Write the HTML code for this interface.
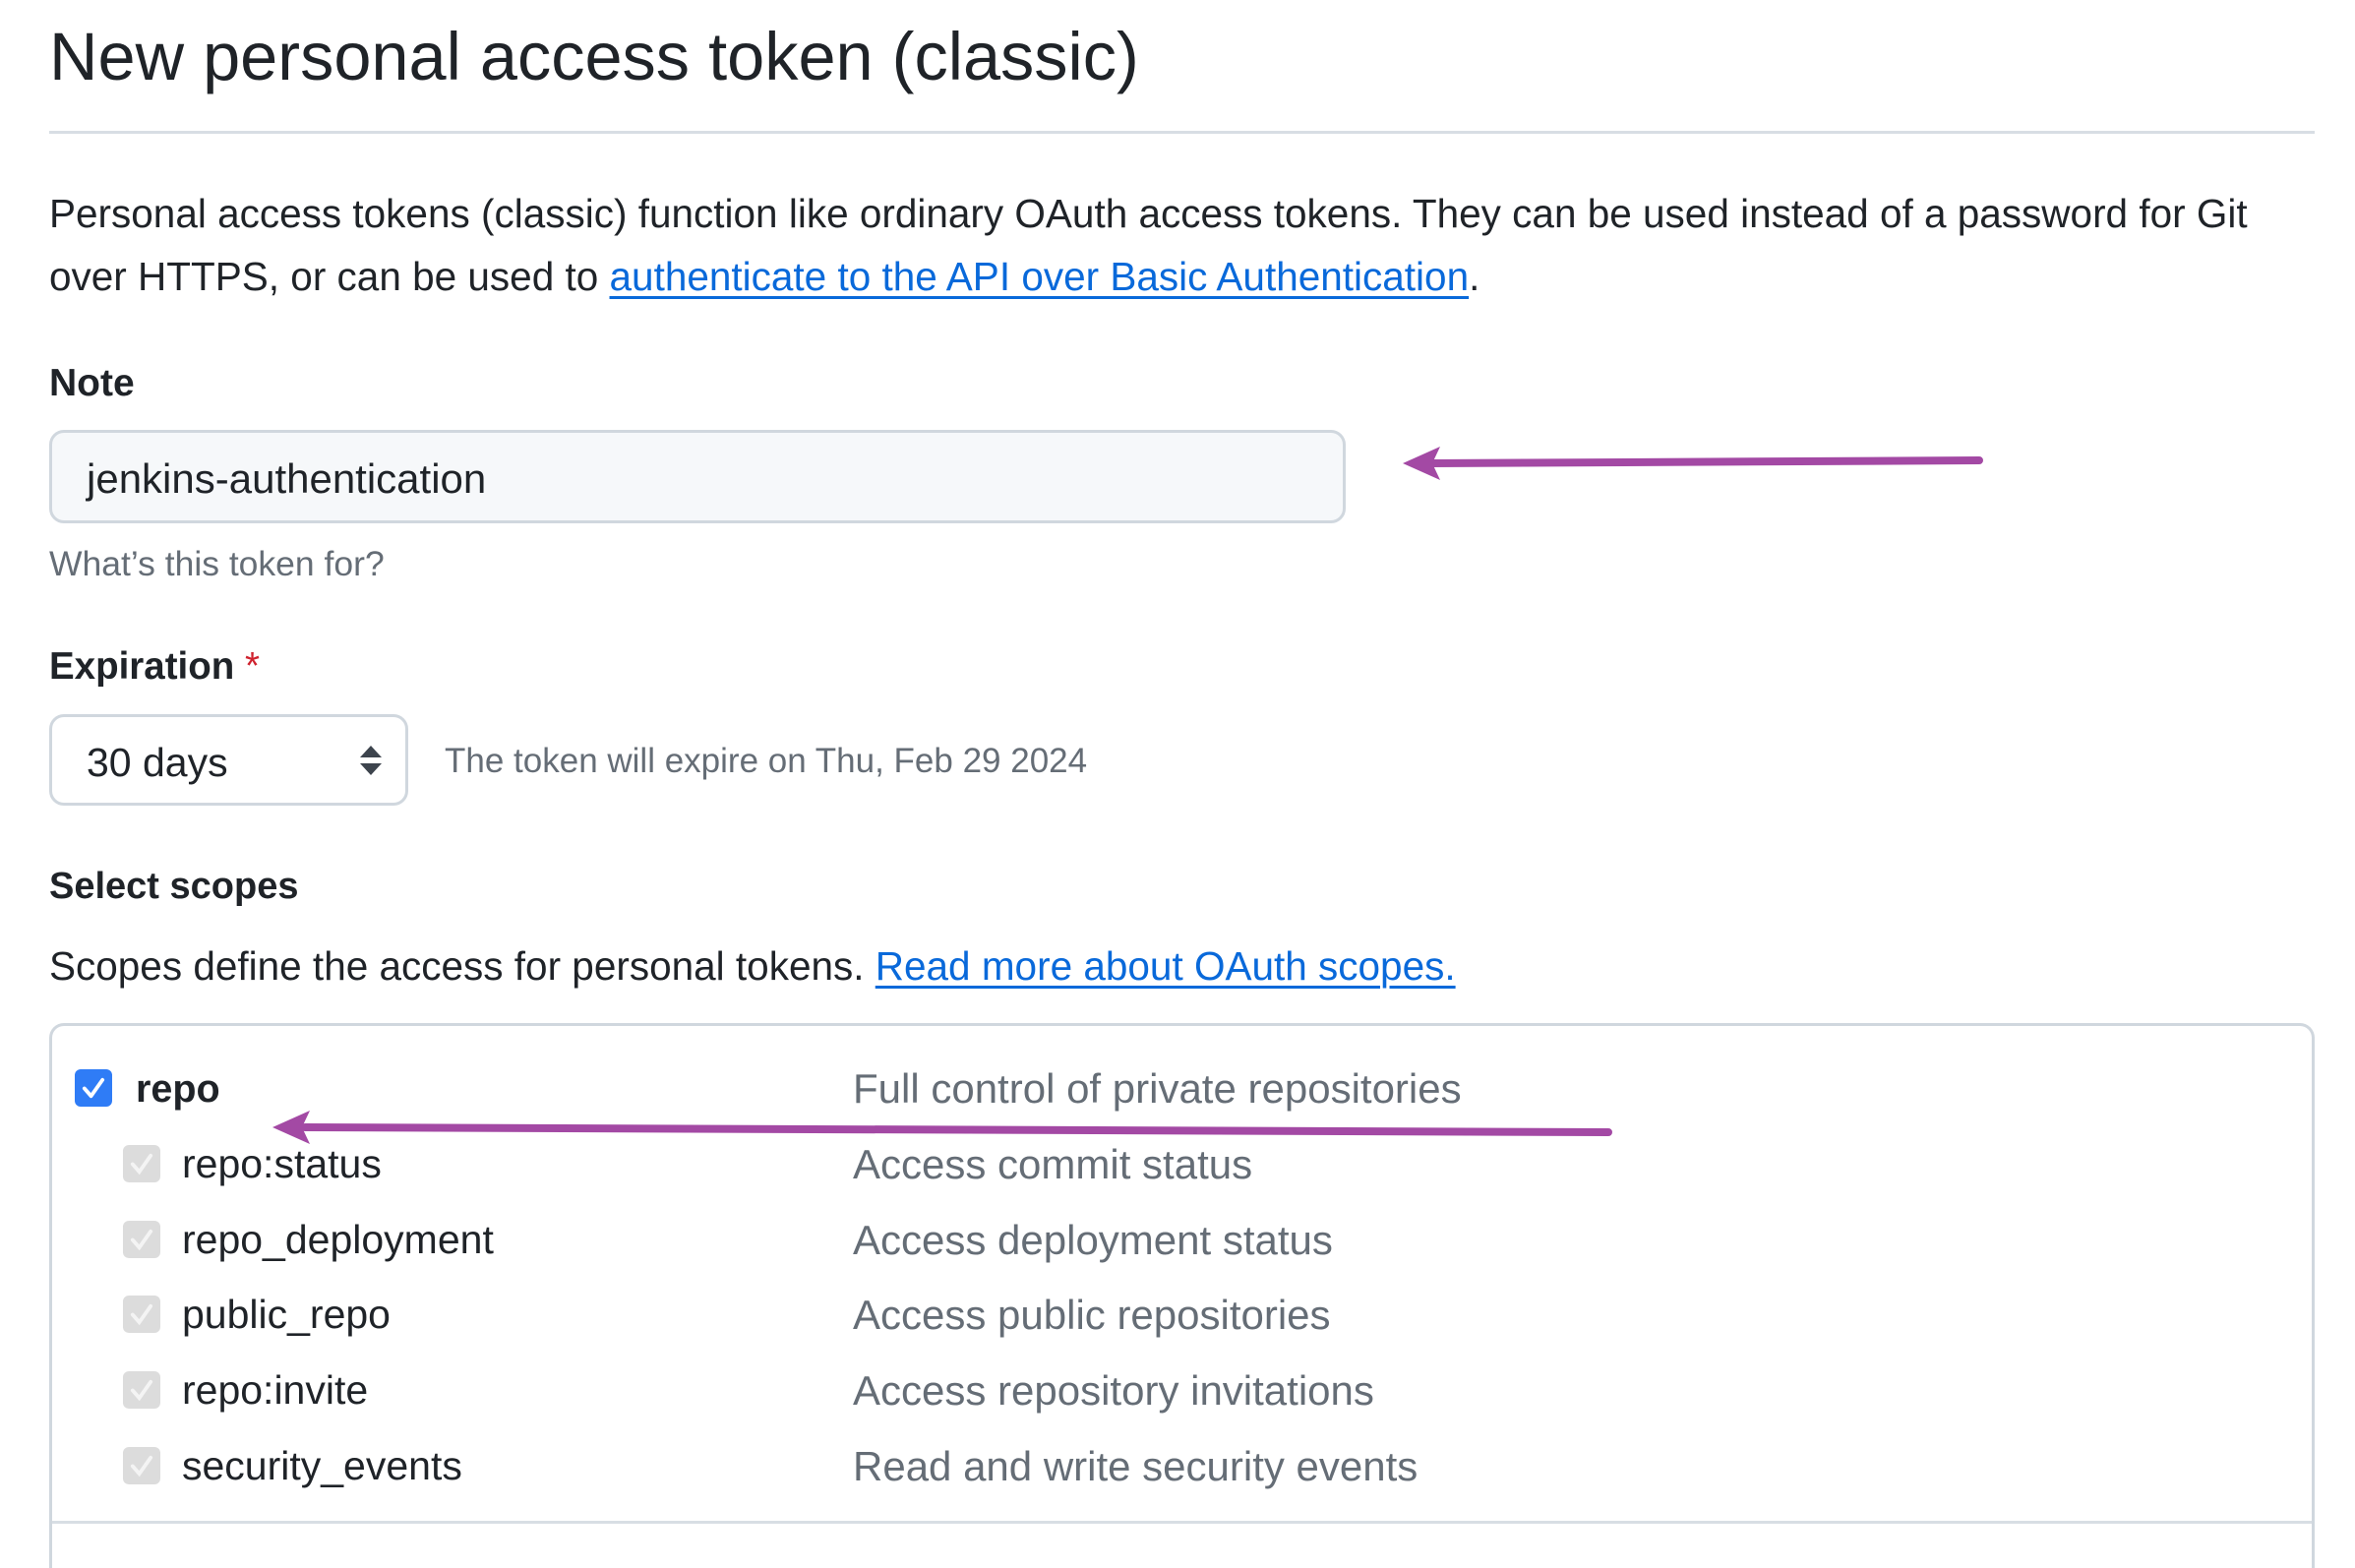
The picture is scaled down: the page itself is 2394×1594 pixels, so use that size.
<!DOCTYPE html>
<html><head><meta charset="utf-8"><style>
*{margin:0;padding:0;box-sizing:border-box}
html,body{width:2394px;height:1594px;overflow:hidden;background:#fff}
body{font-family:"Liberation Sans",sans-serif;color:#1f2328}
#w{position:relative;width:2394px;height:1594px;overflow:hidden}
.a{position:absolute;white-space:nowrap;line-height:1}
a{color:#0969da;text-decoration:underline;text-underline-offset:6px;text-decoration-thickness:3px}
.cb{position:absolute;width:38px;height:38px;border-radius:6px;background:#dcdcdc}
.cb.on{background:#2f7cf6}
.cb svg{position:absolute;left:6px;top:6px}
.d{font-size:42px;color:#656d76;left:867px}
.s{font-size:41px;left:185px}
</style></head><body><div id="w">
<div class="a" style="left:50px;top:24px;font-size:68.5px">New personal access token (classic)</div>
<div style="position:absolute;left:50px;top:133px;width:2303px;height:3px;background:#d8dee4"></div>
<div class="a" style="left:50px;top:197px;font-size:40.5px">Personal access tokens (classic) function like ordinary OAuth access tokens. They can be used instead of a password for Git</div>
<div class="a" style="left:50px;top:261px;font-size:40.5px">over HTTPS, or can be used to <a>authenticate to the API over Basic Authentication</a>.</div>
<div class="a" style="left:50px;top:370px;font-size:39px;font-weight:bold">Note</div>
<div style="position:absolute;left:50px;top:437px;width:1318px;height:95px;background:#f6f8fa;border:3px solid #d0d7de;border-radius:15px"></div>
<div class="a" style="left:88px;top:466px;font-size:42px">jenkins-authentication</div>
<div class="a" style="left:50px;top:556px;font-size:35.5px;color:#656d76">What’s this token for?</div>
<div class="a" style="left:50px;top:659px;font-size:38.5px;font-weight:bold">Expiration <span style="color:#cf222e;font-weight:400">*</span></div>
<div style="position:absolute;left:50px;top:726px;width:365px;height:93px;background:#fff;border:3px solid #d0d7de;border-radius:15px"></div>
<div class="a" style="left:88px;top:755px;font-size:41px">30 days</div>
<svg style="position:absolute;left:364px;top:756px" width="26" height="34" viewBox="0 0 26 34"><path d="M13 2 L24 14 H2Z M13 32 L24 20 H2Z" fill="#3d444d"/></svg>
<div class="a" style="left:452px;top:756px;font-size:35px;color:#656d76">The token will expire on Thu, Feb 29 2024</div>
<div class="a" style="left:50px;top:882px;font-size:38px;font-weight:bold">Select scopes</div>
<div class="a" style="left:50px;top:962px;font-size:40.5px">Scopes define the access for personal tokens. <a>Read more about OAuth scopes.</a></div>
<div style="position:absolute;left:50px;top:1040px;width:2303px;height:554px;border:3px solid #d0d7de;border-bottom:none;border-radius:15px 15px 0 0"></div>
<div style="position:absolute;left:53px;top:1546px;width:2297px;height:3px;background:#d8dee4"></div>
<div class="cb on" style="left:76px;top:1087px"><svg width="26" height="26" viewBox="0 0 27 27"><path d="M4 14 L11 22 L23 5" stroke="#fff" stroke-width="4" fill="none" stroke-linecap="round" stroke-linejoin="round"/></svg></div>
<div class="a" style="left:138px;top:1088px;font-size:39.5px;font-weight:bold">repo</div>
<div class="a d" style="top:1086px">Full control of private repositories</div>
<div class="cb" style="left:125px;top:1164px"><svg width="26" height="26" viewBox="0 0 27 27"><path d="M4 14 L11 22 L23 5" stroke="#f4f4f4" stroke-width="4" fill="none" stroke-linecap="round"/></svg></div>
<div class="a s" style="top:1163px">repo:status</div>
<div class="a d" style="top:1163px">Access commit status</div>
<div class="cb" style="left:125px;top:1241px"><svg width="26" height="26" viewBox="0 0 27 27"><path d="M4 14 L11 22 L23 5" stroke="#f4f4f4" stroke-width="4" fill="none" stroke-linecap="round"/></svg></div>
<div class="a s" style="top:1240px">repo_deployment</div>
<div class="a d" style="top:1240px">Access deployment status</div>
<div class="cb" style="left:125px;top:1317px"><svg width="26" height="26" viewBox="0 0 27 27"><path d="M4 14 L11 22 L23 5" stroke="#f4f4f4" stroke-width="4" fill="none" stroke-linecap="round"/></svg></div>
<div class="a s" style="top:1316px">public_repo</div>
<div class="a d" style="top:1316px">Access public repositories</div>
<div class="cb" style="left:125px;top:1394px"><svg width="26" height="26" viewBox="0 0 27 27"><path d="M4 14 L11 22 L23 5" stroke="#f4f4f4" stroke-width="4" fill="none" stroke-linecap="round"/></svg></div>
<div class="a s" style="top:1393px">repo:invite</div>
<div class="a d" style="top:1393px">Access repository invitations</div>
<div class="cb" style="left:125px;top:1471px"><svg width="26" height="26" viewBox="0 0 27 27"><path d="M4 14 L11 22 L23 5" stroke="#f4f4f4" stroke-width="4" fill="none" stroke-linecap="round"/></svg></div>
<div class="a s" style="top:1470px">security_events</div>
<div class="a d" style="top:1470px">Read and write security events</div>
<svg style="position:absolute;left:0;top:0" width="2394" height="1594">
<path d="M1455 471 L2012 468" stroke="#a349a4" stroke-width="8" stroke-linecap="round"/>
<path d="M1426 471 L1464 454 L1456 471 L1464 488Z" fill="#a349a4"/>
<path d="M310 1146 L1635 1151" stroke="#a349a4" stroke-width="8" stroke-linecap="round"/>
<path d="M277 1146 L315 1129 L307 1146 L315 1163Z" fill="#a349a4"/>
</svg>
</div></body></html>
